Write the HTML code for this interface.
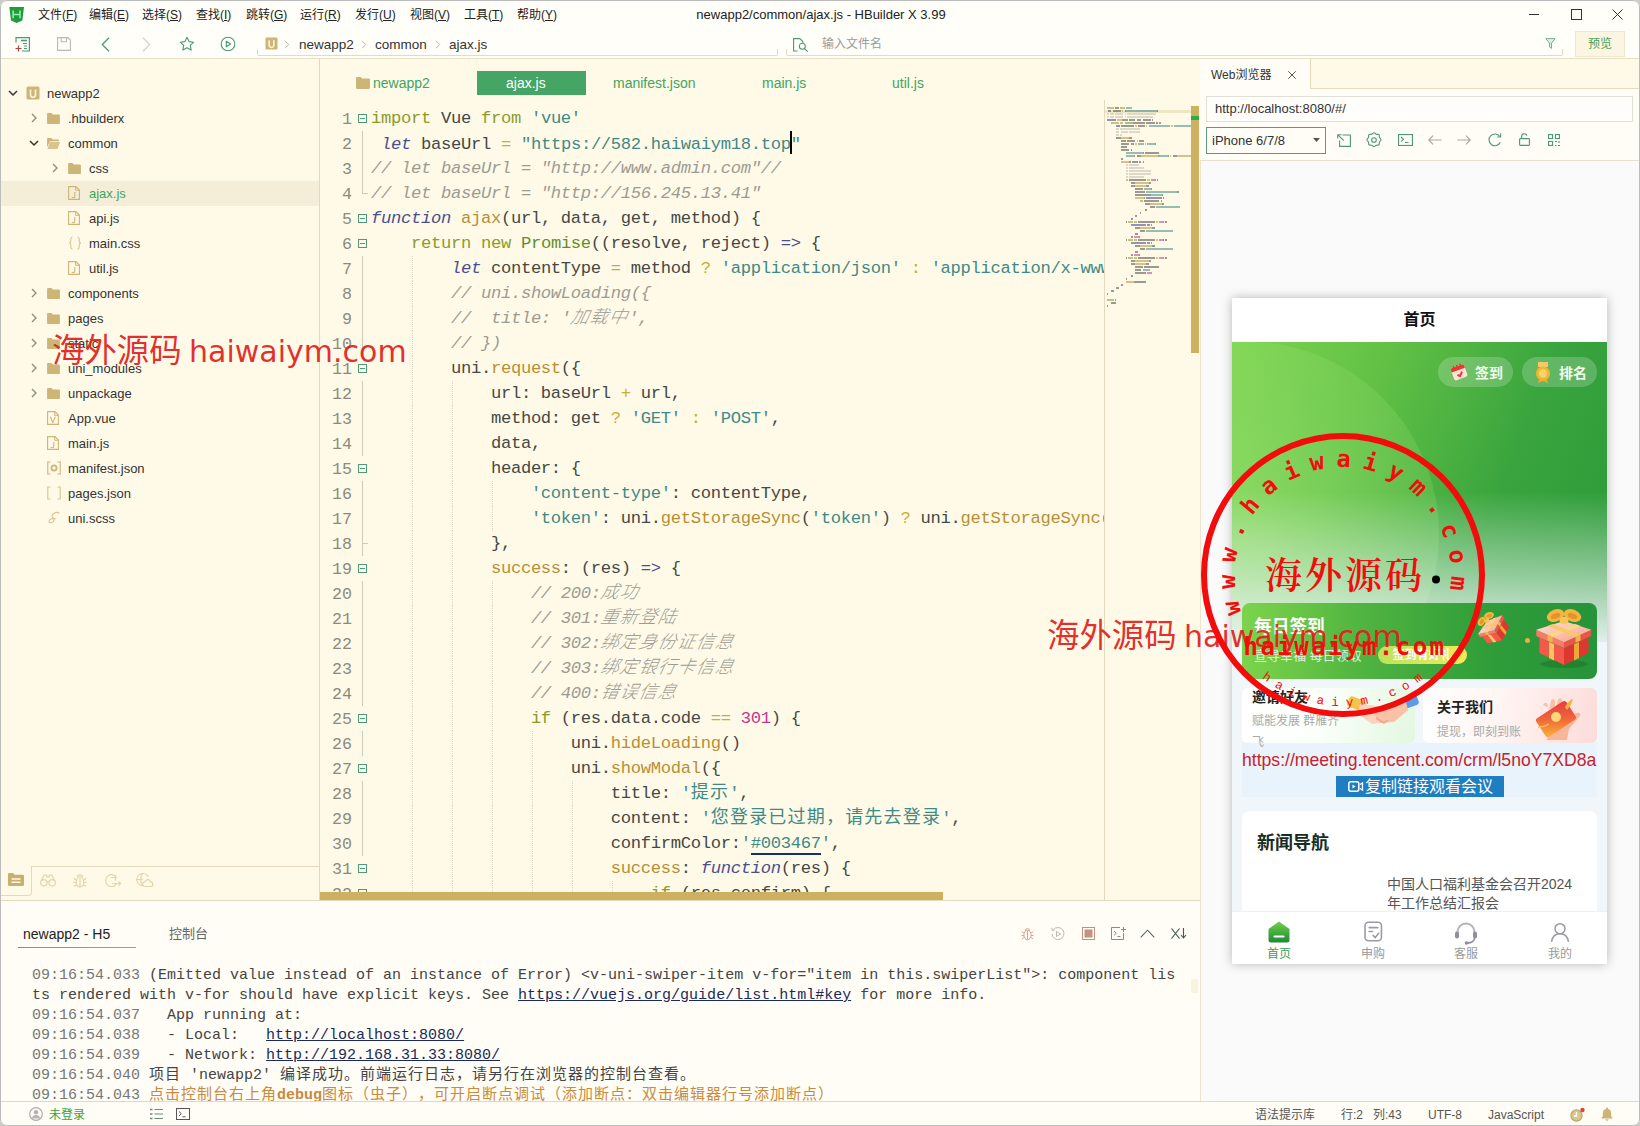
<!DOCTYPE html>
<html lang="zh-CN"><head><meta charset="utf-8"><title>newapp2/common/ajax.js - HBuilder X 3.99</title>
<style>
*{box-sizing:border-box;margin:0;padding:0}
html,body{width:1640px;height:1126px;overflow:hidden;background:#fffae8}
body{position:relative;font-family:"Liberation Sans","Noto Sans CJK SC",sans-serif;font-size:13px;color:#333}
.abs{position:absolute}
svg{display:block;overflow:visible}
#titlebar{position:absolute;left:0;top:0;width:1640px;height:28px;background:#fffef9}
#toolbar{position:absolute;left:0;top:28px;width:1640px;height:31px;background:#fffef9;border-bottom:1px solid #e8dfc4}
.menu{position:absolute;top:7px;font-size:12px;color:#222;white-space:nowrap;line-height:16px}
#title{position:absolute;top:7px;left:0;width:1640px;text-align:center;font-size:13px;color:#222;line-height:16px;padding-left:2px}
/* left */
#left{position:absolute;left:0;top:59px;width:320px;height:841px;background:#fffae8;border-right:1px solid #e3dabd}
.trow{position:absolute;left:0;width:319px;height:25px}
.trow.sel{background:#f4eed8}
.trow .ti{position:absolute}
.trow .tl{position:absolute;top:0;line-height:25px;font-size:13px;color:#333;white-space:nowrap}
.trow.sel .tl{color:#3ea55f}
/* editor */
#editor{position:absolute;left:320px;top:59px;width:880px;height:841px;background:#fffae8;overflow:hidden}
.tab{position:absolute;top:12px;height:24px;line-height:24px;font-size:14px;color:#3ea55f;white-space:nowrap}
#codearea{position:absolute;left:0;top:42px;width:784px;height:791px;overflow:hidden}
.ln{position:absolute;left:0;margin-top:1px;width:32px;text-align:right;font:16.67px/26px "Liberation Mono",monospace;color:#8b8b7d;height:26px}
.cl{position:absolute;left:51px;margin-top:0;white-space:pre;font:17.2px/26px "Liberation Mono","Noto Sans CJK SC",monospace;letter-spacing:-.322px;color:#444944;height:26px}
.fold{position:absolute;left:38px;width:9px;height:9px;border:1px solid #4f9a7a;background:#fffae8}
.fold:after{content:"";position:absolute;left:1px;top:3px;width:5px;height:1px;background:#4f9a7a}
.k{color:#8c9a2c}.b{color:#4a4f8e;font-style:italic}.b2{color:#4a4f8e}.s,.q{color:#3e8a84}
.f{color:#b88f35}.c{color:#9c9c92;font-style:italic}.n{color:#c4388c}.g{color:#5f8f2f}.o{color:#c2b030}
.cz{line-height:20px;font-weight:300;color:#9c9c92;font-style:italic;font-size:18px;letter-spacing:1.1px;font-family:"Liberation Sans","Noto Sans CJK SC",sans-serif;display:inline-block;transform:skewX(-12deg)}
.sz{line-height:20px;color:#3e8a84;font-size:18px;letter-spacing:1.2px;font-family:"Liberation Sans","Noto Sans CJK SC",sans-serif}
.su{color:#3e8a84;border-bottom:2px solid #1b2e6e}
.cur{display:inline-block;width:2px;height:23px;background:#000;vertical-align:-5px;margin:0 -1px}
/* console */
#console{position:absolute;left:0;top:900px;width:1200px;height:201px;background:#fffdf5;border-top:1px solid #e3dabd}
.col{position:absolute;left:32px;margin-top:3px;white-space:pre;font:15px/20px "Liberation Mono","Noto Sans CJK SC",monospace;color:#444;height:20px}
.col .t{color:#777}
.col a{color:#1a2a5e;text-decoration:underline}
.col .w{color:#c88a3c}
.col .z{line-height:16px;font-family:"Liberation Sans","Noto Sans CJK SC",sans-serif;font-size:15px;letter-spacing:1px;text-spacing-trim:space-all}
/* status */
#status{position:absolute;left:0;top:1101px;width:1640px;height:25px;background:#fffdf5;border-top:1px solid #e3dabd;font-size:12px;color:#555}
#status span{position:absolute;top:5px;line-height:16px;white-space:nowrap}
/* right */
#right{position:absolute;left:1200px;top:59px;width:440px;height:1042px;background:#fafafa;box-shadow:inset 1px 0 0 #ece4cc}
.wm{position:absolute;color:rgba(224,28,26,.92);font-size:32.400px;white-space:nowrap;line-height:40px;font-family:"Liberation Sans","Noto Sans CJK SC",sans-serif;z-index:50}

.tray{position:absolute;top:21px;height:7px;border:1px solid #e3dcc3;border-top:none;border-radius:0 0 2px 2px}
.bc{position:absolute;top:9px;font-size:13.500px;line-height:16px;color:#333;white-space:nowrap}

#phone{position:absolute;left:1232px;top:298px;width:375px;height:666px;background:#f1f6fb;box-shadow:0 0 10px rgba(0,0,0,.27);overflow:hidden;font-family:"Liberation Sans","Noto Sans CJK SC",sans-serif}
#phone .abs{position:absolute}
#phead{position:absolute;left:0;top:0;width:375px;height:44px;background:#fff;text-align:center;font-size:16px;font-weight:bold;line-height:44px;color:#111}
#banner{position:absolute;left:0;top:44px;width:375px;height:300px;background:
 linear-gradient(180deg,rgba(255,255,255,0) 0,rgba(255,255,255,0) 50%,rgba(241,246,251,.5) 78%,rgba(241,246,251,.92) 100%),
 radial-gradient(circle 193px at 14.500px 192px,rgba(190,245,150,.34) 0,rgba(170,235,130,.24) 70%,rgba(160,230,120,.20) 99.400%,rgba(160,230,120,0) 100%),
 linear-gradient(112deg,#7dd450 0,#62c145 32%,#3aa53e 66%,#2a9838 100%)}
.pill{position:absolute;top:59px;height:30px;width:75px;border-radius:15px;background:rgba(255,255,255,.2);color:#f4fff2;font-size:14px;font-weight:bold;line-height:30px}
.pill span{position:absolute;left:37px;top:1px}
#tabbar{position:absolute;left:0;top:613px;width:375px;height:53px;background:#fff;border-top:1px solid #f0f0f0}
#tabbar span{position:absolute;top:35px;width:60px;text-align:center;font-size:12px;line-height:14px;color:#999}
.wm span{font-family:"DejaVu Sans","Liberation Sans",sans-serif;font-size:30px;margin-left:-1.500px}

#lbar{position:absolute;left:0;top:866px;width:319px;height:34px;background:#fffae8}
#conlines{position:absolute;left:0;top:0;width:1190px;height:200px;overflow:hidden}
.col.w{color:#c98a3e}
.col.w .t{color:#777}
.col b{font-weight:bold}

#minimap{position:absolute;left:784px;top:41px;width:87px;height:800px;border-left:1px solid #e3dabd;overflow:hidden}
.ig{position:absolute;width:1px;height:25px;background-image:linear-gradient(#d9d4c3 50%,transparent 50%);background-size:1px 2px}
.fl{position:absolute;left:42px;width:1px;background:#cfcab8}
.ft{position:absolute;left:42px;width:6px;height:1px;background:#cfcab8}
#frame{position:absolute;left:0;top:0;width:1640px;height:1126px;border:1px solid #bcbcbc;border-radius:7px;box-shadow:0 0 0 12px #c9c9c9;z-index:200;pointer-events:none}

</style></head>
<body>
<div id="titlebar">
  <svg class="abs" style="left:9px;top:7px" width="16" height="16" viewBox="0 0 16 16"><path d="M.300 0H15l-1.700 13.500L7.600 16 2 13.500z" fill="#1f9c3e"/><path d="M4.100 3.600v7.600M11 3.600v7.600M4.100 7.400H11" stroke="#98f2a8" stroke-width="1.500" fill="none"/></svg>
  <span class="menu" style="left:38px">文件(<u>F</u>)</span>
  <span class="menu" style="left:89px">编辑(<u>E</u>)</span>
  <span class="menu" style="left:142px">选择(<u>S</u>)</span>
  <span class="menu" style="left:196px">查找(<u>I</u>)</span>
  <span class="menu" style="left:246px">跳转(<u>G</u>)</span>
  <span class="menu" style="left:300px">运行(<u>R</u>)</span>
  <span class="menu" style="left:355px">发行(<u>U</u>)</span>
  <span class="menu" style="left:410px">视图(<u>V</u>)</span>
  <span class="menu" style="left:464px">工具(<u>T</u>)</span>
  <span class="menu" style="left:517px">帮助(<u>Y</u>)</span>
  <div id="title">newapp2/common/ajax.js - HBuilder X 3.99</div>
  <svg class="abs" style="left:1529px;top:9px" width="10" height="11" viewBox="0 0 10 11"><path d="M0 5.500h10" stroke="#333" stroke-width="1"/></svg>
  <svg class="abs" style="left:1571px;top:9px" width="11" height="11" viewBox="0 0 11 11"><rect x=".5" y=".5" width="10" height="10" fill="none" stroke="#333" stroke-width="1"/></svg>
  <svg class="abs" style="left:1612px;top:9px" width="11" height="11" viewBox="0 0 11 11"><path d="M.500.500l10 10M10.500.500l-10 10" stroke="#333" stroke-width="1"/></svg>
</div>
<div id="toolbar">
  <!-- new file -->
  <svg class="abs" style="left:15px;top:9px" width="15" height="15" viewBox="0 0 15 15"><path d="M1 5.500V.600h13.400v13.400H7" fill="none" stroke="#4a9a78" stroke-width="1.200"/><path d="M6 3.500h6" stroke="#4a9a78" stroke-width="1.600"/><path d="M8 6.500h4M9 9h3M9 11.500h3" stroke="#4a9a78" stroke-width="1"/><path d="M3.500 8.500v6M.5 11.500h6" stroke="#b8423a" stroke-width="1.200"/></svg>
  <!-- save -->
  <svg class="abs" style="left:57px;top:9px" width="14" height="14" viewBox="0 0 14 14"><path d="M.6.600h10.400l2.400 2.400v10.400H.6z" fill="none" stroke="#b9b9b4" stroke-width="1.100"/><path d="M4.200.600v4.200h5.300V.600" fill="none" stroke="#b9b9b4" stroke-width="1.100"/></svg>
  <!-- back -->
  <svg class="abs" style="left:101px;top:9px" width="9" height="15" viewBox="0 0 9 15"><path d="M8 .800L1.300 7.500 8 14.200" fill="none" stroke="#4a9a78" stroke-width="1.300"/></svg>
  <!-- forward -->
  <svg class="abs" style="left:142px;top:9px" width="9" height="15" viewBox="0 0 9 15"><path d="M1 .800l6.700 6.700L1 14.200" fill="none" stroke="#d4d4cc" stroke-width="1.300"/></svg>
  <!-- star -->
  <svg class="abs" style="left:179px;top:8px" width="16" height="16" viewBox="0 0 16 16"><path d="M8 1.300l2.050 4.300 4.650.600-3.400 3.250.85 4.650L8 11.850 3.850 14.100l.85-4.650L1.300 6.200l4.650-.6z" fill="none" stroke="#4a9a78" stroke-width="1.100" stroke-linejoin="round"/></svg>
  <!-- play -->
  <svg class="abs" style="left:220px;top:8px" width="16" height="16" viewBox="0 0 16 16"><circle cx="8" cy="8" r="6.800" fill="none" stroke="#4a9a78" stroke-width="1.100"/><path d="M6.300 5.200l4.300 2.800-4.300 2.800z" fill="none" stroke="#4a9a78" stroke-width="1.100" stroke-linejoin="round"/></svg>
  <!-- breadcrumb tray -->
  <div class="tray" style="left:257px;width:521px"></div>
  <span class="abs" style="left:265px;top:9px"><svg width="13" height="13" viewBox="0 0 14 14"><rect x="0.500" y="0.500" width="13" height="13" rx="1.500" fill="#cdb477"/><path d="M4.500 3.500v5.200a2.500 2.500 0 0 0 5 0V3.500" fill="none" stroke="#fff8e0" stroke-width="1.600"/></svg></span>
  <svg class="abs" style="left:284px;top:12px" width="6" height="9" viewBox="0 0 6 9"><path d="M1 .800l3.700 3.700L1 8.200" fill="none" stroke="#b5b5ad" stroke-width="1"/></svg>
  <span class="bc" style="left:299px">newapp2</span>
  <svg class="abs" style="left:361px;top:12px" width="6" height="9" viewBox="0 0 6 9"><path d="M1 .800l3.700 3.700L1 8.200" fill="none" stroke="#b5b5ad" stroke-width="1"/></svg>
  <span class="bc" style="left:375px">common</span>
  <svg class="abs" style="left:435px;top:12px" width="6" height="9" viewBox="0 0 6 9"><path d="M1 .800l3.700 3.700L1 8.200" fill="none" stroke="#b5b5ad" stroke-width="1"/></svg>
  <span class="bc" style="left:449px">ajax.js</span>
  <!-- search tray -->
  <div class="tray" style="left:786px;width:777px"></div>
  <svg class="abs" style="left:793px;top:10px" width="16" height="14" viewBox="0 0 16 14"><path d="M4.500 13H.600V.600h6.200l3 3V5" fill="none" stroke="#4a9a78" stroke-width="1.100"/><circle cx="9.300" cy="8.300" r="3" fill="none" stroke="#4a9a78" stroke-width="1.100"/><path d="M11.500 10.600l3.200 3" stroke="#4a9a78" stroke-width="1.100"/></svg>
  <span class="abs" style="left:822px;top:8px;font-size:12px;line-height:16px;color:#9a9a9a">输入文件名</span>
  <svg class="abs" style="left:1545px;top:10px" width="11" height="11" viewBox="0 0 11 11"><path d="M.800.600h9.400L6.500 5v5.400L4.500 9V5z" fill="#dff0e4" stroke="#6ab592" stroke-width="1" stroke-linejoin="round"/></svg>
  <div class="abs" style="left:1575px;top:3px;width:50px;height:26px;background:#fcf5e2;border:1px solid #efe7cf;color:#48a05c;font-size:12px;line-height:24px;text-align:center">预览</div>
</div>

<div id="left">
<div style="position:absolute;left:0;top:-59px;width:320px;height:900px">
<div class="trow" style="top:81px"><span class="ti" style="left:8px;top:8px"><svg width="10" height="8" viewBox="0 0 10 8"><path d="M1 2l4 4 4-4" fill="none" stroke="#333" stroke-width="1.500"/></svg></span><span class="ti" style="left:26px;top:5px"><svg width="14" height="14" viewBox="0 0 14 14"><rect x="0.5" y="0.5" width="13" height="13" rx="1.5" fill="#cdb477"/><path d="M4.5 3.5v5.2a2.5 2.5 0 0 0 5 0V3.500" fill="none" stroke="#fff8e0" stroke-width="1.6"/></svg></span><span class="tl" style="left:47px">newapp2</span></div>
<div class="trow" style="top:106px"><span class="ti" style="left:30px;top:7px"><svg width="8" height="10" viewBox="0 0 8 10"><path d="M2 1l4 4-4 4" fill="none" stroke="#8f8a78" stroke-width="1.300"/></svg></span><span class="ti" style="left:47px;top:7px"><svg width="13" height="11" viewBox="0 0 14 12"><path d="M0 1.2C0 .5.5 0 1.200 0h3.600l1.400 1.600h6.600c.7 0 1.200.5 1.200 1.200V10.800c0 .7-.5 1.200-1.200 1.200H1.200C.5 12 0 11.500 0 10.800z" fill="#cdb477"/></svg></span><span class="tl" style="left:68px">.hbuilderx</span></div>
<div class="trow" style="top:131px"><span class="ti" style="left:29px;top:8px"><svg width="10" height="8" viewBox="0 0 10 8"><path d="M1 2l4 4 4-4" fill="none" stroke="#333" stroke-width="1.500"/></svg></span><span class="ti" style="left:47px;top:7px"><svg width="13" height="11" viewBox="0 0 14 12"><path d="M0 1.200C0 .5.5 0 1.200 0h3.600l1.400 1.600h5.600c.7 0 1.200.5 1.200 1.200v.8H3.200L0 10z" fill="#cdb477"/><path d="M3 4.400h11l-2.400 7.600H.4z" fill="#d9c48f"/></svg></span><span class="tl" style="left:68px">common</span></div>
<div class="trow" style="top:156px"><span class="ti" style="left:51px;top:7px"><svg width="8" height="10" viewBox="0 0 8 10"><path d="M2 1l4 4-4 4" fill="none" stroke="#8f8a78" stroke-width="1.300"/></svg></span><span class="ti" style="left:68px;top:7px"><svg width="13" height="11" viewBox="0 0 14 12"><path d="M0 1.2C0 .5.5 0 1.200 0h3.600l1.400 1.600h6.600c.7 0 1.200.5 1.200 1.200V10.800c0 .7-.5 1.200-1.200 1.200H1.200C.5 12 0 11.500 0 10.800z" fill="#cdb477"/></svg></span><span class="tl" style="left:89px">css</span></div>
<div class="trow sel" style="top:181px"><span class="ti" style="left:68px;top:5px"><svg width="12" height="14" viewBox="0 0 12 14"><path d="M.6.600h7.300l3.500 3.500v9.300H.6z" fill="none" stroke="#cdb477" stroke-width="1.100"/><path d="M7.700.600v3.700h3.700" fill="none" stroke="#cdb477" stroke-width="1"/><path d="M6.800 6v4.200c0 1.100-.5 1.600-1.400 1.600-.8 0-1.300-.4-1.500-1" fill="none" stroke="#cdb477" stroke-width="1.100"/></svg></span><span class="tl" style="left:89px">ajax.js</span></div>
<div class="trow" style="top:206px"><span class="ti" style="left:68px;top:5px"><svg width="12" height="14" viewBox="0 0 12 14"><path d="M.6.600h7.300l3.500 3.500v9.300H.6z" fill="none" stroke="#cdb477" stroke-width="1.100"/><path d="M7.700.600v3.700h3.700" fill="none" stroke="#cdb477" stroke-width="1"/><path d="M6.800 6v4.200c0 1.100-.5 1.600-1.400 1.600-.8 0-1.300-.4-1.500-1" fill="none" stroke="#cdb477" stroke-width="1.100"/></svg></span><span class="tl" style="left:89px">api.js</span></div>
<div class="trow" style="top:231px"><span class="ti" style="left:68px;top:5px"><svg width="14" height="14" viewBox="0 0 14 14"><path d="M4.500 1C3 1 2.800 1.800 2.800 3v2c0 1.200-.6 2-1.800 2 1.200 0 1.800.8 1.800 2v2c0 1.200.2 2 1.700 2M9.500 1c1.500 0 1.700.8 1.700 2v2c0 1.200.6 2 1.800 2-1.200 0-1.800.8-1.800 2v2c0 1.200-.2 2-1.700 2" fill="none" stroke="#d9c48f" stroke-width="1.100"/></svg></span><span class="tl" style="left:89px">main.css</span></div>
<div class="trow" style="top:256px"><span class="ti" style="left:68px;top:5px"><svg width="12" height="14" viewBox="0 0 12 14"><path d="M.6.600h7.300l3.500 3.500v9.300H.6z" fill="none" stroke="#cdb477" stroke-width="1.100"/><path d="M7.700.600v3.700h3.700" fill="none" stroke="#cdb477" stroke-width="1"/><path d="M6.800 6v4.200c0 1.100-.5 1.600-1.400 1.600-.8 0-1.300-.4-1.500-1" fill="none" stroke="#cdb477" stroke-width="1.100"/></svg></span><span class="tl" style="left:89px">util.js</span></div>
<div class="trow" style="top:281px"><span class="ti" style="left:30px;top:7px"><svg width="8" height="10" viewBox="0 0 8 10"><path d="M2 1l4 4-4 4" fill="none" stroke="#8f8a78" stroke-width="1.300"/></svg></span><span class="ti" style="left:47px;top:7px"><svg width="13" height="11" viewBox="0 0 14 12"><path d="M0 1.2C0 .5.5 0 1.200 0h3.600l1.400 1.600h6.600c.7 0 1.200.5 1.200 1.200V10.800c0 .7-.5 1.200-1.200 1.200H1.200C.5 12 0 11.500 0 10.800z" fill="#cdb477"/></svg></span><span class="tl" style="left:68px">components</span></div>
<div class="trow" style="top:306px"><span class="ti" style="left:30px;top:7px"><svg width="8" height="10" viewBox="0 0 8 10"><path d="M2 1l4 4-4 4" fill="none" stroke="#8f8a78" stroke-width="1.300"/></svg></span><span class="ti" style="left:47px;top:7px"><svg width="13" height="11" viewBox="0 0 14 12"><path d="M0 1.2C0 .5.5 0 1.200 0h3.600l1.400 1.600h6.600c.7 0 1.200.5 1.200 1.200V10.800c0 .7-.5 1.200-1.200 1.200H1.200C.5 12 0 11.500 0 10.800z" fill="#cdb477"/></svg></span><span class="tl" style="left:68px">pages</span></div>
<div class="trow" style="top:331px"><span class="ti" style="left:30px;top:7px"><svg width="8" height="10" viewBox="0 0 8 10"><path d="M2 1l4 4-4 4" fill="none" stroke="#8f8a78" stroke-width="1.300"/></svg></span><span class="ti" style="left:47px;top:7px"><svg width="13" height="11" viewBox="0 0 14 12"><path d="M0 1.2C0 .5.5 0 1.200 0h3.600l1.400 1.600h6.600c.7 0 1.200.5 1.200 1.200V10.800c0 .7-.5 1.200-1.200 1.200H1.200C.5 12 0 11.500 0 10.800z" fill="#cdb477"/></svg></span><span class="tl" style="left:68px">static</span></div>
<div class="trow" style="top:356px"><span class="ti" style="left:30px;top:7px"><svg width="8" height="10" viewBox="0 0 8 10"><path d="M2 1l4 4-4 4" fill="none" stroke="#8f8a78" stroke-width="1.300"/></svg></span><span class="ti" style="left:47px;top:7px"><svg width="13" height="11" viewBox="0 0 14 12"><path d="M0 1.2C0 .5.5 0 1.200 0h3.600l1.400 1.600h6.600c.7 0 1.200.5 1.200 1.200V10.800c0 .7-.5 1.200-1.200 1.200H1.200C.5 12 0 11.500 0 10.800z" fill="#cdb477"/></svg></span><span class="tl" style="left:68px">uni_modules</span></div>
<div class="trow" style="top:381px"><span class="ti" style="left:30px;top:7px"><svg width="8" height="10" viewBox="0 0 8 10"><path d="M2 1l4 4-4 4" fill="none" stroke="#8f8a78" stroke-width="1.300"/></svg></span><span class="ti" style="left:47px;top:7px"><svg width="13" height="11" viewBox="0 0 14 12"><path d="M0 1.2C0 .5.5 0 1.200 0h3.600l1.400 1.600h6.600c.7 0 1.200.5 1.200 1.200V10.800c0 .7-.5 1.200-1.200 1.200H1.200C.5 12 0 11.500 0 10.800z" fill="#cdb477"/></svg></span><span class="tl" style="left:68px">unpackage</span></div>
<div class="trow" style="top:406px"><span class="ti" style="left:47px;top:5px"><svg width="12" height="14" viewBox="0 0 12 14"><path d="M.6.600h7.300l3.500 3.500v9.300H.6z" fill="none" stroke="#cdb477" stroke-width="1.100"/><path d="M7.700.600v3.700h3.700" fill="none" stroke="#cdb477" stroke-width="1"/><path d="M3.200 5.800l2.600 5.600 2.600-5.600" fill="none" stroke="#cdb477" stroke-width="1.100"/></svg></span><span class="tl" style="left:68px">App.vue</span></div>
<div class="trow" style="top:431px"><span class="ti" style="left:47px;top:5px"><svg width="12" height="14" viewBox="0 0 12 14"><path d="M.6.600h7.300l3.500 3.500v9.300H.6z" fill="none" stroke="#cdb477" stroke-width="1.100"/><path d="M7.700.600v3.700h3.700" fill="none" stroke="#cdb477" stroke-width="1"/><path d="M6.800 6v4.200c0 1.100-.5 1.600-1.400 1.600-.8 0-1.300-.4-1.500-1" fill="none" stroke="#cdb477" stroke-width="1.100"/></svg></span><span class="tl" style="left:68px">main.js</span></div>
<div class="trow" style="top:456px"><span class="ti" style="left:47px;top:5px"><svg width="14" height="14" viewBox="0 0 14 14"><path d="M3.500 1H.8v12h2.700M10.500 1h2.700v12h-2.700" fill="none" stroke="#cdb477" stroke-width="1.100"/><circle cx="7" cy="7" r="2.600" fill="none" stroke="#cdb477" stroke-width="1.800"/></svg></span><span class="tl" style="left:68px">manifest.json</span></div>
<div class="trow" style="top:481px"><span class="ti" style="left:47px;top:5px"><svg width="14" height="14" viewBox="0 0 14 14"><path d="M3.500 1H.8v12h2.700M10.500 1h2.700v12h-2.700" fill="none" stroke="#d9c48f" stroke-width="1.100"/></svg></span><span class="tl" style="left:68px">pages.json</span></div>
<div class="trow" style="top:506px"><span class="ti" style="left:47px;top:5px"><svg width="14" height="14" viewBox="0 0 14 14"><path d="M12.500 2.500C11 .5 6 1.500 5 4.500c-.8 2.300 2.500 3 2 5-.4 1.700-3 3-4.500 2-1.200-.8-.3-2.600 1.500-3.500 1.600-.8 3.500-.7 4.500 0" fill="none" stroke="#d9c48f" stroke-width="1.100"/></svg></span><span class="tl" style="left:68px">uni.scss</span></div>
</div>
</div>

<div id="editor">
  <div class="tab" style="left:53px;color:#3ea55f">newapp2</div>
  <div class="tab" style="left:157px;width:109px;background:#44a565;color:#fff;padding-left:29px">ajax.js</div>
  <div class="tab" style="left:293px">manifest.json</div>
  <div class="tab" style="left:442px">main.js</div>
  <div class="tab" style="left:572px">util.js</div>
  <svg class="abs" style="left:36px;top:18px" width="14" height="12" viewBox="0 0 14 12"><path d="M0 1.200C0 .5.5 0 1.200 0h3.600l1.400 1.600h6.600c.7 0 1.200.5 1.200 1.200V10.800c0 .7-.5 1.200-1.200 1.200H1.200C.5 12 0 11.500 0 10.800z" fill="#cdb477"/></svg>
  <div id="minimap"><div class="abs" style="left:0;top:6px;width:87px;height:800px"><div class="abs" style="left:0;top:4px;width:87px;height:3px;background:#efe6c6"></div><svg class="abs" style="left:0;top:0" width="87" height="203" viewBox="0 0 87 203" shape-rendering="crispEdges"><rect x="1.5" y="1" width="7.2" height="2" fill="#8c9a2c" opacity=".55"/><rect x="9.9" y="1" width="3.6" height="2" fill="#4a4a44" opacity=".55"/><rect x="14.7" y="1" width="4.8" height="2" fill="#8c9a2c" opacity=".55"/><rect x="20.7" y="1" width="6.0" height="2" fill="#3e8a84" opacity=".55"/><rect x="2.7" y="4" width="3.6" height="2" fill="#3c3c96" opacity=".55"/><rect x="7.5" y="4" width="8.4" height="2" fill="#4a4a44" opacity=".55"/><rect x="17.1" y="4" width="1.2" height="2" fill="#b2a02c" opacity=".55"/><rect x="19.5" y="4" width="1.2" height="2" fill="#3a3a3a" opacity=".55"/><rect x="20.7" y="4" width="31.2" height="2" fill="#3e8a84" opacity=".55"/><rect x="51.9" y="4" width="1.2" height="2" fill="#3a3a3a" opacity=".55"/><rect x="1.5" y="7" width="2.4" height="2" fill="#a8a89e" opacity=".4"/><rect x="5.1" y="7" width="3.6" height="2" fill="#a8a89e" opacity=".4"/><rect x="9.9" y="7" width="8.4" height="2" fill="#a8a89e" opacity=".4"/><rect x="19.5" y="7" width="1.2" height="2" fill="#a8a89e" opacity=".4"/><rect x="21.9" y="7" width="28.8" height="2" fill="#a8a89e" opacity=".4"/><rect x="1.5" y="10" width="2.4" height="2" fill="#a8a89e" opacity=".4"/><rect x="5.1" y="10" width="3.6" height="2" fill="#a8a89e" opacity=".4"/><rect x="9.9" y="10" width="8.4" height="2" fill="#a8a89e" opacity=".4"/><rect x="19.5" y="10" width="1.2" height="2" fill="#a8a89e" opacity=".4"/><rect x="21.9" y="10" width="26.4" height="2" fill="#a8a89e" opacity=".4"/><rect x="1.5" y="13" width="9.6" height="2" fill="#3c3c96" opacity=".55"/><rect x="12.3" y="13" width="4.8" height="2" fill="#b88f35" opacity=".55"/><rect x="17.1" y="13" width="6.0" height="2" fill="#4a4a44" opacity=".55"/><rect x="24.3" y="13" width="6.0" height="2" fill="#4a4a44" opacity=".55"/><rect x="31.5" y="13" width="4.8" height="2" fill="#4a4a44" opacity=".55"/><rect x="37.5" y="13" width="8.4" height="2" fill="#4a4a44" opacity=".55"/><rect x="47.1" y="13" width="1.2" height="2" fill="#4a4a44" opacity=".55"/><rect x="6.3" y="16" width="7.2" height="2" fill="#8c9a2c" opacity=".55"/><rect x="14.7" y="16" width="3.6" height="2" fill="#8c9a2c" opacity=".55"/><rect x="19.5" y="16" width="8.4" height="2" fill="#5f8f2f" opacity=".55"/><rect x="27.9" y="16" width="12.0" height="2" fill="#4a4a44" opacity=".55"/><rect x="41.1" y="16" width="8.4" height="2" fill="#4a4a44" opacity=".55"/><rect x="50.7" y="16" width="2.4" height="2" fill="#3c3c96" opacity=".55"/><rect x="54.3" y="16" width="1.2" height="2" fill="#4a4a44" opacity=".55"/><rect x="11.1" y="19" width="3.6" height="2" fill="#3c3c96" opacity=".55"/><rect x="15.9" y="19" width="13.2" height="2" fill="#4a4a44" opacity=".55"/><rect x="30.3" y="19" width="1.2" height="2" fill="#b2a02c" opacity=".55"/><rect x="32.7" y="19" width="7.2" height="2" fill="#4a4a44" opacity=".55"/><rect x="41.1" y="19" width="1.2" height="2" fill="#b2a02c" opacity=".55"/><rect x="43.5" y="19" width="21.6" height="2" fill="#3e8a84" opacity=".55"/><rect x="66.3" y="19" width="1.2" height="2" fill="#b2a02c" opacity=".55"/><rect x="68.7" y="19" width="17.3" height="2" fill="#3e8a84" opacity=".55"/><rect x="11.1" y="22" width="2.4" height="2" fill="#a8a89e" opacity=".4"/><rect x="14.7" y="22" width="20.4" height="2" fill="#a8a89e" opacity=".4"/><rect x="11.1" y="25" width="2.4" height="2" fill="#a8a89e" opacity=".4"/><rect x="15.9" y="25" width="7.2" height="2" fill="#a8a89e" opacity=".4"/><rect x="24.3" y="25" width="1.2" height="2" fill="#a8a89e" opacity=".4"/><rect x="25.5" y="25" width="7.2" height="2" fill="#a8a89e" opacity=".4"/><rect x="32.7" y="25" width="2.4" height="2" fill="#a8a89e" opacity=".4"/><rect x="11.1" y="28" width="2.4" height="2" fill="#a8a89e" opacity=".4"/><rect x="14.7" y="28" width="2.4" height="2" fill="#a8a89e" opacity=".4"/><rect x="11.1" y="31" width="4.8" height="2" fill="#4a4a44" opacity=".55"/><rect x="15.9" y="31" width="8.4" height="2" fill="#b88f35" opacity=".55"/><rect x="24.3" y="31" width="2.4" height="2" fill="#4a4a44" opacity=".55"/><rect x="15.9" y="34" width="4.8" height="2" fill="#4a4a44" opacity=".55"/><rect x="21.9" y="34" width="8.4" height="2" fill="#4a4a44" opacity=".55"/><rect x="31.5" y="34" width="1.2" height="2" fill="#b2a02c" opacity=".55"/><rect x="33.9" y="34" width="4.8" height="2" fill="#4a4a44" opacity=".55"/><rect x="15.9" y="37" width="8.4" height="2" fill="#4a4a44" opacity=".55"/><rect x="25.5" y="37" width="3.6" height="2" fill="#4a4a44" opacity=".55"/><rect x="30.3" y="37" width="1.2" height="2" fill="#b2a02c" opacity=".55"/><rect x="32.7" y="37" width="6.0" height="2" fill="#3e8a84" opacity=".55"/><rect x="39.9" y="37" width="1.2" height="2" fill="#b2a02c" opacity=".55"/><rect x="42.3" y="37" width="7.2" height="2" fill="#3e8a84" opacity=".55"/><rect x="49.5" y="37" width="1.2" height="2" fill="#4a4a44" opacity=".55"/><rect x="15.9" y="40" width="6.0" height="2" fill="#4a4a44" opacity=".55"/><rect x="15.9" y="43" width="8.4" height="2" fill="#4a4a44" opacity=".55"/><rect x="25.5" y="43" width="1.2" height="2" fill="#4a4a44" opacity=".55"/><rect x="20.7" y="46" width="16.8" height="2" fill="#3e8a84" opacity=".55"/><rect x="37.5" y="46" width="1.2" height="2" fill="#4a4a44" opacity=".55"/><rect x="39.9" y="46" width="14.4" height="2" fill="#4a4a44" opacity=".55"/><rect x="20.7" y="49" width="8.4" height="2" fill="#3e8a84" opacity=".55"/><rect x="29.1" y="49" width="1.2" height="2" fill="#4a4a44" opacity=".55"/><rect x="31.5" y="49" width="4.8" height="2" fill="#4a4a44" opacity=".55"/><rect x="36.3" y="49" width="16.8" height="2" fill="#b88f35" opacity=".55"/><rect x="53.1" y="49" width="1.2" height="2" fill="#4a4a44" opacity=".55"/><rect x="54.3" y="49" width="8.4" height="2" fill="#3e8a84" opacity=".55"/><rect x="62.7" y="49" width="1.2" height="2" fill="#4a4a44" opacity=".55"/><rect x="65.1" y="49" width="1.2" height="2" fill="#b2a02c" opacity=".55"/><rect x="67.5" y="49" width="4.8" height="2" fill="#4a4a44" opacity=".55"/><rect x="72.3" y="49" width="13.7" height="2" fill="#b88f35" opacity=".55"/><rect x="15.9" y="52" width="2.4" height="2" fill="#4a4a44" opacity=".55"/><rect x="15.9" y="55" width="8.4" height="2" fill="#b88f35" opacity=".55"/><rect x="24.3" y="55" width="1.2" height="2" fill="#4a4a44" opacity=".55"/><rect x="26.7" y="55" width="6.0" height="2" fill="#4a4a44" opacity=".55"/><rect x="33.9" y="55" width="2.4" height="2" fill="#3c3c96" opacity=".55"/><rect x="37.5" y="55" width="1.2" height="2" fill="#4a4a44" opacity=".55"/><rect x="20.7" y="58" width="2.4" height="2" fill="#a8a89e" opacity=".4"/><rect x="24.3" y="58" width="4.8" height="2" fill="#a8a89e" opacity=".4"/><rect x="29.1" y="58" width="4.8" height="2" fill="#a8a89e" opacity=".4"/><rect x="20.7" y="61" width="2.4" height="2" fill="#a8a89e" opacity=".4"/><rect x="24.3" y="61" width="4.8" height="2" fill="#a8a89e" opacity=".4"/><rect x="29.1" y="61" width="9.6" height="2" fill="#a8a89e" opacity=".4"/><rect x="20.7" y="64" width="2.4" height="2" fill="#a8a89e" opacity=".4"/><rect x="24.3" y="64" width="4.8" height="2" fill="#a8a89e" opacity=".4"/><rect x="29.1" y="64" width="16.8" height="2" fill="#a8a89e" opacity=".4"/><rect x="20.7" y="67" width="2.4" height="2" fill="#a8a89e" opacity=".4"/><rect x="24.3" y="67" width="4.8" height="2" fill="#a8a89e" opacity=".4"/><rect x="29.1" y="67" width="16.8" height="2" fill="#a8a89e" opacity=".4"/><rect x="20.7" y="70" width="2.4" height="2" fill="#a8a89e" opacity=".4"/><rect x="24.3" y="70" width="4.8" height="2" fill="#a8a89e" opacity=".4"/><rect x="29.1" y="70" width="9.6" height="2" fill="#a8a89e" opacity=".4"/><rect x="20.7" y="73" width="2.4" height="2" fill="#8c9a2c" opacity=".55"/><rect x="24.3" y="73" width="16.8" height="2" fill="#4a4a44" opacity=".55"/><rect x="42.3" y="73" width="2.4" height="2" fill="#b2a02c" opacity=".55"/><rect x="45.9" y="73" width="3.6" height="2" fill="#c4388c" opacity=".55"/><rect x="49.5" y="73" width="1.2" height="2" fill="#4a4a44" opacity=".55"/><rect x="51.9" y="73" width="1.2" height="2" fill="#4a4a44" opacity=".55"/><rect x="25.5" y="76" width="4.8" height="2" fill="#4a4a44" opacity=".55"/><rect x="30.3" y="76" width="13.2" height="2" fill="#b88f35" opacity=".55"/><rect x="43.5" y="76" width="2.4" height="2" fill="#4a4a44" opacity=".55"/><rect x="25.5" y="79" width="4.8" height="2" fill="#4a4a44" opacity=".55"/><rect x="30.3" y="79" width="10.8" height="2" fill="#b88f35" opacity=".55"/><rect x="41.1" y="79" width="2.4" height="2" fill="#4a4a44" opacity=".55"/><rect x="30.3" y="82" width="7.2" height="2" fill="#4a4a44" opacity=".55"/><rect x="38.7" y="82" width="1.2" height="2" fill="#3e8a84" opacity=".55"/><rect x="39.9" y="82" width="4.8" height="2" fill="#3e8a84" opacity=".55"/><rect x="44.7" y="82" width="1.2" height="2" fill="#3e8a84" opacity=".55"/><rect x="45.9" y="82" width="1.2" height="2" fill="#4a4a44" opacity=".55"/><rect x="30.3" y="85" width="9.6" height="2" fill="#4a4a44" opacity=".55"/><rect x="41.1" y="85" width="1.2" height="2" fill="#3e8a84" opacity=".55"/><rect x="42.3" y="85" width="28.8" height="2" fill="#3e8a84" opacity=".55"/><rect x="71.1" y="85" width="1.2" height="2" fill="#3e8a84" opacity=".55"/><rect x="72.3" y="85" width="1.2" height="2" fill="#4a4a44" opacity=".55"/><rect x="30.3" y="88" width="15.6" height="2" fill="#4a4a44" opacity=".55"/><rect x="45.9" y="88" width="1.2" height="2" fill="#3e8a84" opacity=".55"/><rect x="47.1" y="88" width="8.4" height="2" fill="#3e8a84" opacity=".55"/><rect x="55.5" y="88" width="1.2" height="2" fill="#3e8a84" opacity=".55"/><rect x="56.7" y="88" width="1.2" height="2" fill="#4a4a44" opacity=".55"/><rect x="30.3" y="91" width="8.4" height="2" fill="#b88f35" opacity=".55"/><rect x="38.7" y="91" width="1.2" height="2" fill="#4a4a44" opacity=".55"/><rect x="41.1" y="91" width="9.6" height="2" fill="#3c3c96" opacity=".55"/><rect x="50.7" y="91" width="6.0" height="2" fill="#4a4a44" opacity=".55"/><rect x="57.9" y="91" width="1.2" height="2" fill="#4a4a44" opacity=".55"/><rect x="35.1" y="94" width="2.4" height="2" fill="#8c9a2c" opacity=".55"/><rect x="38.7" y="94" width="15.6" height="2" fill="#4a4a44" opacity=".55"/><rect x="55.5" y="94" width="1.2" height="2" fill="#4a4a44" opacity=".55"/><rect x="39.9" y="97" width="4.8" height="2" fill="#4a4a44" opacity=".55"/><rect x="44.7" y="97" width="12.0" height="2" fill="#b88f35" opacity=".55"/><rect x="56.7" y="97" width="2.4" height="2" fill="#4a4a44" opacity=".55"/><rect x="44.7" y="100" width="4.8" height="2" fill="#4a4a44" opacity=".55"/><rect x="50.7" y="100" width="24.0" height="2" fill="#3e8a84" opacity=".55"/><rect x="39.9" y="103" width="2.4" height="2" fill="#4a4a44" opacity=".55"/><rect x="35.1" y="106" width="1.2" height="2" fill="#4a4a44" opacity=".55"/><rect x="30.3" y="109" width="1.2" height="2" fill="#4a4a44" opacity=".55"/><rect x="25.5" y="112" width="2.4" height="2" fill="#4a4a44" opacity=".55"/><rect x="20.7" y="115" width="1.2" height="2" fill="#4a4a44" opacity=".55"/><rect x="23.1" y="115" width="4.8" height="2" fill="#8c9a2c" opacity=".55"/><rect x="29.1" y="115" width="2.4" height="2" fill="#8c9a2c" opacity=".55"/><rect x="32.7" y="115" width="16.8" height="2" fill="#4a4a44" opacity=".55"/><rect x="50.7" y="115" width="2.4" height="2" fill="#b2a02c" opacity=".55"/><rect x="54.3" y="115" width="3.6" height="2" fill="#c4388c" opacity=".55"/><rect x="57.9" y="115" width="1.2" height="2" fill="#4a4a44" opacity=".55"/><rect x="60.3" y="115" width="1.2" height="2" fill="#4a4a44" opacity=".55"/><rect x="25.5" y="118" width="12.0" height="2" fill="#3c3c96" opacity=".55"/><rect x="37.5" y="118" width="3.6" height="2" fill="#4a4a44" opacity=".55"/><rect x="42.3" y="118" width="2.4" height="2" fill="#3c3c96" opacity=".55"/><rect x="45.9" y="118" width="1.2" height="2" fill="#4a4a44" opacity=".55"/><rect x="30.3" y="121" width="4.8" height="2" fill="#4a4a44" opacity=".55"/><rect x="35.1" y="121" width="12.0" height="2" fill="#b88f35" opacity=".55"/><rect x="47.1" y="121" width="2.4" height="2" fill="#4a4a44" opacity=".55"/><rect x="35.1" y="124" width="4.8" height="2" fill="#4a4a44" opacity=".55"/><rect x="41.1" y="124" width="26.4" height="2" fill="#3e8a84" opacity=".55"/><rect x="30.3" y="127" width="2.4" height="2" fill="#4a4a44" opacity=".55"/><rect x="25.5" y="130" width="2.4" height="2" fill="#4a4a44" opacity=".55"/><rect x="29.1" y="130" width="4.8" height="2" fill="#c4388c" opacity=".55"/><rect x="33.9" y="130" width="1.2" height="2" fill="#4a4a44" opacity=".55"/><rect x="20.7" y="133" width="1.2" height="2" fill="#4a4a44" opacity=".55"/><rect x="23.1" y="133" width="4.8" height="2" fill="#8c9a2c" opacity=".55"/><rect x="29.1" y="133" width="2.4" height="2" fill="#8c9a2c" opacity=".55"/><rect x="32.7" y="133" width="16.8" height="2" fill="#4a4a44" opacity=".55"/><rect x="50.7" y="133" width="2.4" height="2" fill="#b2a02c" opacity=".55"/><rect x="54.3" y="133" width="3.6" height="2" fill="#c4388c" opacity=".55"/><rect x="57.9" y="133" width="1.2" height="2" fill="#4a4a44" opacity=".55"/><rect x="60.3" y="133" width="1.2" height="2" fill="#4a4a44" opacity=".55"/><rect x="25.5" y="136" width="12.0" height="2" fill="#3c3c96" opacity=".55"/><rect x="37.5" y="136" width="3.6" height="2" fill="#4a4a44" opacity=".55"/><rect x="42.3" y="136" width="2.4" height="2" fill="#3c3c96" opacity=".55"/><rect x="45.9" y="136" width="1.2" height="2" fill="#4a4a44" opacity=".55"/><rect x="30.3" y="139" width="4.8" height="2" fill="#4a4a44" opacity=".55"/><rect x="35.1" y="139" width="12.0" height="2" fill="#b88f35" opacity=".55"/><rect x="47.1" y="139" width="2.4" height="2" fill="#4a4a44" opacity=".55"/><rect x="35.1" y="142" width="4.8" height="2" fill="#4a4a44" opacity=".55"/><rect x="41.1" y="142" width="26.4" height="2" fill="#3e8a84" opacity=".55"/><rect x="30.3" y="145" width="2.4" height="2" fill="#4a4a44" opacity=".55"/><rect x="25.5" y="148" width="2.4" height="2" fill="#4a4a44" opacity=".55"/><rect x="29.1" y="148" width="4.8" height="2" fill="#c4388c" opacity=".55"/><rect x="33.9" y="148" width="1.2" height="2" fill="#4a4a44" opacity=".55"/><rect x="20.7" y="151" width="1.2" height="2" fill="#4a4a44" opacity=".55"/><rect x="23.1" y="151" width="4.8" height="2" fill="#8c9a2c" opacity=".55"/><rect x="29.1" y="151" width="2.4" height="2" fill="#8c9a2c" opacity=".55"/><rect x="32.7" y="151" width="16.8" height="2" fill="#4a4a44" opacity=".55"/><rect x="50.7" y="151" width="2.4" height="2" fill="#b2a02c" opacity=".55"/><rect x="54.3" y="151" width="3.6" height="2" fill="#c4388c" opacity=".55"/><rect x="57.9" y="151" width="1.2" height="2" fill="#4a4a44" opacity=".55"/><rect x="60.3" y="151" width="1.2" height="2" fill="#4a4a44" opacity=".55"/><rect x="25.5" y="154" width="4.8" height="2" fill="#4a4a44" opacity=".55"/><rect x="30.3" y="154" width="13.2" height="2" fill="#b88f35" opacity=".55"/><rect x="43.5" y="154" width="2.4" height="2" fill="#4a4a44" opacity=".55"/><rect x="25.5" y="157" width="4.8" height="2" fill="#4a4a44" opacity=".55"/><rect x="30.3" y="157" width="10.8" height="2" fill="#b88f35" opacity=".55"/><rect x="41.1" y="157" width="2.4" height="2" fill="#4a4a44" opacity=".55"/><rect x="30.3" y="160" width="7.2" height="2" fill="#4a4a44" opacity=".55"/><rect x="38.7" y="160" width="15.6" height="2" fill="#4a4a44" opacity=".55"/><rect x="30.3" y="163" width="6.0" height="2" fill="#4a4a44" opacity=".55"/><rect x="37.5" y="163" width="7.2" height="2" fill="#3e8a84" opacity=".55"/><rect x="30.3" y="166" width="10.8" height="2" fill="#4a4a44" opacity=".55"/><rect x="42.3" y="166" width="4.8" height="2" fill="#c4388c" opacity=".55"/><rect x="25.5" y="169" width="2.4" height="2" fill="#4a4a44" opacity=".55"/><rect x="20.7" y="172" width="1.2" height="2" fill="#4a4a44" opacity=".55"/><rect x="20.7" y="175" width="8.4" height="2" fill="#b88f35" opacity=".55"/><rect x="29.1" y="175" width="12.0" height="2" fill="#4a4a44" opacity=".55"/><rect x="15.9" y="178" width="2.4" height="2" fill="#4a4a44" opacity=".55"/><rect x="11.1" y="181" width="2.4" height="2" fill="#4a4a44" opacity=".55"/><rect x="6.3" y="184" width="2.4" height="2" fill="#4a4a44" opacity=".55"/><rect x="1.5" y="187" width="1.2" height="2" fill="#4a4a44" opacity=".55"/><rect x="1.5" y="193" width="7.2" height="2" fill="#8c9a2c" opacity=".55"/><rect x="9.9" y="193" width="1.2" height="2" fill="#4a4a44" opacity=".55"/><rect x="6.3" y="196" width="4.8" height="2" fill="#4a4a44" opacity=".55"/><rect x="1.5" y="199" width="1.2" height="2" fill="#4a4a44" opacity=".55"/></svg></div></div>
  <div class="abs" style="left:871px;top:47px;width:8px;height:247px;background:#cdb160"></div>
  <div class="abs" style="left:871px;top:57px;width:8px;height:4px;background:#22b14c"></div>
  <div class="abs" style="left:0;top:833px;width:623px;height:8px;background:#cdb160"></div>
  <div id="codearea">
<i class="ig" style="left:92px;top:155px"></i>
<i class="ig" style="left:92px;top:180px"></i>
<i class="ig" style="left:92px;top:205px"></i>
<i class="ig" style="left:92px;top:230px"></i>
<i class="ig" style="left:92px;top:255px"></i>
<i class="ig" style="left:92px;top:280px"></i>
<i class="ig" style="left:132px;top:280px"></i>
<i class="ig" style="left:92px;top:305px"></i>
<i class="ig" style="left:132px;top:305px"></i>
<i class="ig" style="left:92px;top:330px"></i>
<i class="ig" style="left:132px;top:330px"></i>
<i class="ig" style="left:92px;top:355px"></i>
<i class="ig" style="left:132px;top:355px"></i>
<i class="ig" style="left:92px;top:380px"></i>
<i class="ig" style="left:132px;top:380px"></i>
<i class="ig" style="left:172px;top:380px"></i>
<i class="ig" style="left:92px;top:405px"></i>
<i class="ig" style="left:132px;top:405px"></i>
<i class="ig" style="left:172px;top:405px"></i>
<i class="ig" style="left:92px;top:430px"></i>
<i class="ig" style="left:132px;top:430px"></i>
<i class="ig" style="left:92px;top:455px"></i>
<i class="ig" style="left:132px;top:455px"></i>
<i class="ig" style="left:92px;top:480px"></i>
<i class="ig" style="left:132px;top:480px"></i>
<i class="ig" style="left:172px;top:480px"></i>
<i class="ig" style="left:92px;top:505px"></i>
<i class="ig" style="left:132px;top:505px"></i>
<i class="ig" style="left:172px;top:505px"></i>
<i class="ig" style="left:92px;top:530px"></i>
<i class="ig" style="left:132px;top:530px"></i>
<i class="ig" style="left:172px;top:530px"></i>
<i class="ig" style="left:92px;top:555px"></i>
<i class="ig" style="left:132px;top:555px"></i>
<i class="ig" style="left:172px;top:555px"></i>
<i class="ig" style="left:92px;top:580px"></i>
<i class="ig" style="left:132px;top:580px"></i>
<i class="ig" style="left:172px;top:580px"></i>
<i class="ig" style="left:92px;top:605px"></i>
<i class="ig" style="left:132px;top:605px"></i>
<i class="ig" style="left:172px;top:605px"></i>
<i class="ig" style="left:92px;top:630px"></i>
<i class="ig" style="left:132px;top:630px"></i>
<i class="ig" style="left:172px;top:630px"></i>
<i class="ig" style="left:212px;top:630px"></i>
<i class="ig" style="left:92px;top:655px"></i>
<i class="ig" style="left:132px;top:655px"></i>
<i class="ig" style="left:172px;top:655px"></i>
<i class="ig" style="left:212px;top:655px"></i>
<i class="ig" style="left:92px;top:680px"></i>
<i class="ig" style="left:132px;top:680px"></i>
<i class="ig" style="left:172px;top:680px"></i>
<i class="ig" style="left:212px;top:680px"></i>
<i class="ig" style="left:252px;top:680px"></i>
<i class="ig" style="left:92px;top:705px"></i>
<i class="ig" style="left:132px;top:705px"></i>
<i class="ig" style="left:172px;top:705px"></i>
<i class="ig" style="left:212px;top:705px"></i>
<i class="ig" style="left:252px;top:705px"></i>
<i class="ig" style="left:92px;top:730px"></i>
<i class="ig" style="left:132px;top:730px"></i>
<i class="ig" style="left:172px;top:730px"></i>
<i class="ig" style="left:212px;top:730px"></i>
<i class="ig" style="left:252px;top:730px"></i>
<i class="ig" style="left:92px;top:755px"></i>
<i class="ig" style="left:132px;top:755px"></i>
<i class="ig" style="left:172px;top:755px"></i>
<i class="ig" style="left:212px;top:755px"></i>
<i class="ig" style="left:252px;top:755px"></i>
<i class="ig" style="left:92px;top:780px"></i>
<i class="ig" style="left:132px;top:780px"></i>
<i class="ig" style="left:172px;top:780px"></i>
<i class="ig" style="left:212px;top:780px"></i>
<i class="ig" style="left:252px;top:780px"></i>
<i class="ig" style="left:292px;top:780px"></i>
<i class="fl" style="top:30px;height:25px"></i>
<i class="fl" style="top:55px;height:25px"></i>
<i class="fl" style="top:155px;height:25px"></i>
<i class="fl" style="top:180px;height:25px"></i>
<i class="fl" style="top:205px;height:25px"></i>
<i class="fl" style="top:230px;height:25px"></i>
<i class="fl" style="top:280px;height:25px"></i>
<i class="fl" style="top:305px;height:25px"></i>
<i class="fl" style="top:330px;height:25px"></i>
<i class="fl" style="top:380px;height:25px"></i>
<i class="fl" style="top:405px;height:25px"></i>
<i class="fl" style="top:430px;height:25px"></i>
<i class="fl" style="top:480px;height:25px"></i>
<i class="fl" style="top:505px;height:25px"></i>
<i class="fl" style="top:530px;height:25px"></i>
<i class="fl" style="top:555px;height:25px"></i>
<i class="fl" style="top:580px;height:25px"></i>
<i class="fl" style="top:630px;height:25px"></i>
<i class="fl" style="top:680px;height:25px"></i>
<i class="fl" style="top:705px;height:25px"></i>
<i class="fl" style="top:730px;height:25px"></i>
<i class="fl" style="top:80px;height:13px"></i><i class="ft" style="top:92px"></i>
<i class="ft" style="top:442px"></i><div class="ln" style="top:5px">1</div>
<div class="fold" style="top:13px"></div>
<div class="cl" style="top:5px"><span class="k">import</span> Vue <span class="k">from</span> <span class="s">'vue'</span></div>
<div class="ln" style="top:30px">2</div>
<div class="cl" style="top:30px"> <span class="b">let</span> baseUrl <span class="o">=</span> <span class="q">"</span><span class="s">https://582.haiwaiym18.top</span><i class="cur"></i><span class="q">"</span></div>
<div class="ln" style="top:55px">3</div>
<div class="cl" style="top:55px"><span class="c">// let baseUrl = "http://www.admin.com"//</span></div>
<div class="ln" style="top:80px">4</div>
<div class="cl" style="top:80px"><span class="c">// let baseUrl = "http://156.245.13.41"</span></div>
<div class="ln" style="top:105px">5</div>
<div class="fold" style="top:113px"></div>
<div class="cl" style="top:105px"><span class="b">function</span> <span class="f">ajax</span>(url, data, get, method) {</div>
<div class="ln" style="top:130px">6</div>
<div class="fold" style="top:138px"></div>
<div class="cl" style="top:130px">    <span class="k">return</span> <span class="k">new</span> <span class="g">Promise</span>((resolve, reject) <span class="b2">=&gt;</span> {</div>
<div class="ln" style="top:155px">7</div>
<div class="cl" style="top:155px">        <span class="b">let</span> contentType <span class="o">=</span> method <span class="o">?</span> <span class="s">'application/json'</span> <span class="o">:</span> <span class="s">'application/x-www-form-urlencoded'</span></div>
<div class="ln" style="top:180px">8</div>
<div class="cl" style="top:180px">        <span class="c">// uni.showLoading({</span></div>
<div class="ln" style="top:205px">9</div>
<div class="cl" style="top:205px">        <span class="c">//  title: '</span><span class="cz">加载中</span><span class="c">',</span></div>
<div class="ln" style="top:230px">10</div>
<div class="cl" style="top:230px">        <span class="c">// })</span></div>
<div class="ln" style="top:255px">11</div>
<div class="fold" style="top:263px"></div>
<div class="cl" style="top:255px">        uni.<span class="f">request</span>({</div>
<div class="ln" style="top:280px">12</div>
<div class="cl" style="top:280px">            url: baseUrl <span class="o">+</span> url,</div>
<div class="ln" style="top:305px">13</div>
<div class="cl" style="top:305px">            method: get <span class="o">?</span> <span class="s">'GET'</span> <span class="o">:</span> <span class="s">'POST'</span>,</div>
<div class="ln" style="top:330px">14</div>
<div class="cl" style="top:330px">            data,</div>
<div class="ln" style="top:355px">15</div>
<div class="fold" style="top:363px"></div>
<div class="cl" style="top:355px">            header: {</div>
<div class="ln" style="top:380px">16</div>
<div class="cl" style="top:380px">                <span class="s">'content-type'</span>: contentType,</div>
<div class="ln" style="top:405px">17</div>
<div class="cl" style="top:405px">                <span class="s">'token'</span>: uni.<span class="f">getStorageSync</span>(<span class="s">'token'</span>) <span class="o">?</span> uni.<span class="f">getStorageSync</span>(<span class="s">'token'</span>)</div>
<div class="ln" style="top:430px">18</div>
<div class="cl" style="top:430px">            },</div>
<div class="ln" style="top:455px">19</div>
<div class="fold" style="top:463px"></div>
<div class="cl" style="top:455px">            <span class="f">success</span>: (res) <span class="b2">=&gt;</span> {</div>
<div class="ln" style="top:480px">20</div>
<div class="cl" style="top:480px">                <span class="c">// 200:</span><span class="cz">成功</span></div>
<div class="ln" style="top:505px">21</div>
<div class="cl" style="top:505px">                <span class="c">// 301:</span><span class="cz">重新登陆</span></div>
<div class="ln" style="top:530px">22</div>
<div class="cl" style="top:530px">                <span class="c">// 302:</span><span class="cz">绑定身份证信息</span></div>
<div class="ln" style="top:555px">23</div>
<div class="cl" style="top:555px">                <span class="c">// 303:</span><span class="cz">绑定银行卡信息</span></div>
<div class="ln" style="top:580px">24</div>
<div class="cl" style="top:580px">                <span class="c">// 400:</span><span class="cz">错误信息</span></div>
<div class="ln" style="top:605px">25</div>
<div class="fold" style="top:613px"></div>
<div class="cl" style="top:605px">                <span class="k">if</span> (res.data.code <span class="o">==</span> <span class="n">301</span>) {</div>
<div class="ln" style="top:630px">26</div>
<div class="cl" style="top:630px">                    uni.<span class="f">hideLoading</span>()</div>
<div class="ln" style="top:655px">27</div>
<div class="fold" style="top:663px"></div>
<div class="cl" style="top:655px">                    uni.<span class="f">showModal</span>({</div>
<div class="ln" style="top:680px">28</div>
<div class="cl" style="top:680px">                        title: <span class="s">'</span><span class="sz">提示</span><span class="s">'</span>,</div>
<div class="ln" style="top:705px">29</div>
<div class="cl" style="top:705px">                        content: <span class="s">'</span><span class="sz">您登录已过期，请先去登录</span><span class="s">'</span>,</div>
<div class="ln" style="top:730px">30</div>
<div class="cl" style="top:730px">                        confirmColor:<span class="s">'</span><span class="su">#003467</span><span class="s">'</span>,</div>
<div class="ln" style="top:755px">31</div>
<div class="fold" style="top:763px"></div>
<div class="cl" style="top:755px">                        <span class="f">success</span>: <span class="b">function</span>(res) {</div>
<div class="ln" style="top:780px">32</div>
<div class="fold" style="top:788px"></div>
<div class="cl" style="top:780px">                            <span class="k">if</span> (res.confirm) {</div>
  </div>
</div>

<div id="lbar">
  <div class="abs" style="left:31px;top:0;width:288px;height:1px;background:#e3dabd"></div>
  <div class="abs" style="left:0;top:0;width:32px;height:30px;border:1px solid #e3dabd;border-top:none;border-left:none;border-radius:0 0 4px 0"></div>
  <svg class="abs" style="left:8px;top:7px" width="16" height="13" viewBox="0 0 16 13"><path d="M0 1.200C0 .5.5 0 1.200 0h4l1.500 1.800h8.100c.7 0 1.200.5 1.200 1.200v8.800c0 .7-.5 1.200-1.200 1.200H1.200C.5 13 0 12.500 0 11.800z" fill="#c9b06e"/><path d="M3.500 6h9M3.500 9.300h9" stroke="#fffae8" stroke-width="1.500"/></svg>
  <svg class="abs" style="left:40px;top:8px" width="16" height="13" viewBox="0 0 16 13"><circle cx="3.800" cy="8.800" r="3.200" fill="none" stroke="#e3d5aa" stroke-width="1.200"/><circle cx="12.200" cy="8.800" r="3.200" fill="none" stroke="#e3d5aa" stroke-width="1.200"/><path d="M1.500 6.500L4 1.200h2.500l.5 2h2l.5-2H12l2.500 5.300M7 7.500h2" fill="none" stroke="#e3d5aa" stroke-width="1.200"/></svg>
  <svg class="abs" style="left:73px;top:7px" width="14" height="15" viewBox="0 0 14 15"><ellipse cx="7" cy="9" rx="3.800" ry="5" fill="none" stroke="#e3d5aa" stroke-width="1.200"/><path d="M4.500 4.300a2.500 2.500 0 0 1 5 0M7 5v9M3.200 7L.8 5.200M3.200 9.500H.5M3.200 12l-2.300 1.600M10.800 7l2.400-1.800M10.800 9.500h2.700M10.800 12l2.300 1.600" fill="none" stroke="#e3d5aa" stroke-width="1.200"/></svg>
  <svg class="abs" style="left:104px;top:7px" width="17" height="15" viewBox="0 0 17 15"><path d="M12.500 11.200A6 6 0 1 1 13 5" fill="none" stroke="#e3d5aa" stroke-width="1.200"/><path d="M6.500 4.500h5v3.200M8 10.500h8.500M14.500 8.500l2 2-2 2" fill="none" stroke="#e3d5aa" stroke-width="1.200"/></svg>
  <svg class="abs" style="left:136px;top:7px" width="17" height="15" viewBox="0 0 17 15"><path d="M7.500 12.500A6 6 0 1 1 12.300 4M.8 6.500h6M6.500.600C4 4 4 9 6.500 12.500" fill="none" stroke="#e3d5aa" stroke-width="1.200"/><path d="M8.500 13.500h6a2.200 2.200 0 0 0 .3-4.400 3 3 0 0 0-5.800-.3A2.400 2.400 0 0 0 8.500 13.500z" fill="none" stroke="#e3d5aa" stroke-width="1.200"/></svg>
</div>
<div id="console">
  <span class="abs" style="left:23px;top:24px;font-size:14px;line-height:18px;color:#222;white-space:nowrap">newapp2 - H5</span>
  <div class="abs" style="left:18px;top:46px;width:118px;height:1px;background:linear-gradient(90deg,#5fa585,#8aa89a)"></div>
  <span class="abs" style="left:169px;top:24px;font-size:13px;line-height:18px;color:#666;white-space:nowrap">控制台</span>
  <!-- right icons -->
  <svg class="abs" style="left:1021px;top:26px" width="13" height="14" viewBox="0 0 13 14"><ellipse cx="6.500" cy="8" rx="3.600" ry="4.800" fill="none" stroke="#dba392" stroke-width="1"/><path d="M4.300 3.800a2.200 2.200 0 0 1 4.400 0M6.500 4v8.500M2.900 6L.8 4.500M2.900 8.500H.5M2.900 10.500l-2 1.500M10.100 6l2.100-1.500M10.100 8.500h2.400M10.100 10.500l2 1.500" fill="none" stroke="#dba392" stroke-width="1"/></svg>
  <svg class="abs" style="left:1051px;top:26px" width="14" height="14" viewBox="0 0 14 14"><path d="M2.300 2.800A6 6 0 1 1 1 7" fill="none" stroke="#b9b8b4" stroke-width="1"/><path d="M1 .8v2.500h2.500" fill="none" stroke="#b9b8b4" stroke-width="1"/><path d="M5.500 4.500l4 2.500-4 2.500z" fill="none" stroke="#b9b8b4" stroke-width="1" stroke-linejoin="round"/></svg>
  <svg class="abs" style="left:1082px;top:26px" width="13" height="13" viewBox="0 0 13 13"><rect x=".500" y=".500" width="12" height="12" fill="none" stroke="#c4907f" stroke-width="1"/><rect x="2.500" y="2.500" width="8" height="8" fill="#c4907f"/></svg>
  <svg class="abs" style="left:1111px;top:26px" width="15" height="13" viewBox="0 0 15 13"><path d="M9 .500H.5v12h12V6" fill="none" stroke="#6a9a84" stroke-width="1"/><path d="M3 4l2.300 2.200L3 8.400M6.500 9.500h3" fill="none" stroke="#6a9a84" stroke-width="1"/><path d="M12.500 0v5M10 2.500h5" stroke="#6a9a84" stroke-width="1"/></svg>
  <svg class="abs" style="left:1140px;top:28px" width="15" height="9" viewBox="0 0 15 9"><path d="M.700 8.300L7.500 1.200l6.800 7.100" fill="none" stroke="#4a6a5c" stroke-width="1.100"/></svg>
  <svg class="abs" style="left:1171px;top:27px" width="16" height="11" viewBox="0 0 16 11"><path d="M.500.500l8 10M8.500.500l-8 10" stroke="#3c5c4e" stroke-width="1.200"/><path d="M12.500 0v9.500M10 7l2.500 3L15 7" fill="none" stroke="#3c5c4e" stroke-width="1.100"/></svg>
  <div class="abs" style="left:1191px;top:78px;width:7px;height:14px;background:#faf3e0"></div>
  <!-- lines -->
  <div id="conlines">
  <div class="col" style="top:62px"><span class="t">09:16:54.033 </span>(Emitted value instead of an instance of Error) &lt;v-uni-swiper-item v-for="item in this.swiperList"&gt;: component lis</div>
  <div class="col" style="top:82px">ts rendered with v-for should have explicit keys. See <a>https://vuejs.org/guide/list.html#key</a> for more info.</div>
  <div class="col" style="top:102px"><span class="t">09:16:54.037 </span>  App running at:</div>
  <div class="col" style="top:122px"><span class="t">09:16:54.038 </span>  - Local:   <a>http://localhost:8080/</a></div>
  <div class="col" style="top:142px"><span class="t">09:16:54.039 </span>  - Network: <a>http://192.168.31.33:8080/</a></div>
  <div class="col" style="top:162px"><span class="t">09:16:54.040 </span><span class="z">项目</span> 'newapp2' <span class="z">编译成功。前端运行日志，请另行在浏览器的控制台查看。</span></div>
  <div class="col w" style="top:182px"><span class="t">09:16:54.043 </span><span class="z">点击控制台右上角</span><b>debug</b><span class="z">图标（虫子），可开启断点调试（添加断点：双击编辑器行号添加断点）</span></div>
  </div>
</div>
<div id="status">
  <svg class="abs" style="left:29px;top:5px" width="14" height="14" viewBox="0 0 14 14"><circle cx="7" cy="7" r="6.300" fill="none" stroke="#adadab" stroke-width="1.200"/><circle cx="7" cy="5.300" r="2.300" fill="#b5b5b3"/><path d="M2.800 11.500c.6-2.600 2.200-3.600 4.200-3.600s3.600 1 4.200 3.600" fill="#b5b5b3"/></svg>
  <span style="left:49px;color:#35a046">未登录</span>
  <svg class="abs" style="left:150px;top:6px" width="13" height="12" viewBox="0 0 13 12"><path d="M0 1.500h2.500M0 6h2.500M0 10.500h2.500" stroke="#6c8a7c" stroke-width="1.600"/><path d="M4.500 1.500H13M4.500 6H13M4.500 10.500H13" stroke="#6c8a7c" stroke-width="1.100"/></svg>
  <svg class="abs" style="left:176px;top:6px" width="14" height="12" viewBox="0 0 14 12"><rect x=".500" y=".500" width="13" height="11" fill="none" stroke="#555" stroke-width="1"/><path d="M3 3.500l2.300 2.200L3 7.900M6.500 8.800h3" fill="none" stroke="#555" stroke-width="1"/></svg>
  <span style="left:1255px">语法提示库</span>
  <span style="left:1341px">行:2 &nbsp;&nbsp;列:43</span>
  <span style="left:1428px">UTF-8</span>
  <span style="left:1488px">JavaScript</span>
  <svg class="abs" style="left:1570px;top:5px" width="16" height="15" viewBox="0 0 16 15"><circle cx="6.500" cy="8.500" r="5.600" fill="#d9c68e" stroke="#bfa866" stroke-width="1.200"/><path d="M6.500 5v4h-2.500" fill="none" stroke="#fff" stroke-width="1.400"/><circle cx="12.500" cy="3" r="2.200" fill="#e2432f"/></svg>
  <svg class="abs" style="left:1601px;top:5px" width="12" height="14" viewBox="0 0 12 14"><path d="M6 .500c.6 0 1 .4 1 1v.4c2 .5 3.200 2.200 3.200 4.400v2.900l1.300 1.600v.7H.5v-.7l1.300-1.600V6.300c0-2.200 1.200-3.900 3.200-4.400v-.4c0-.6.400-1 1-1z" fill="#cdb477"/><path d="M4.500 12.300a1.500 1.500 0 0 0 3 0z" fill="#cdb477"/></svg>
</div>
<div id="right">
  <div class="abs" style="left:0;top:0;width:439px;height:30px;background:#fffae8;border-bottom:1px solid #e3dabd"></div>
  <div class="abs" style="left:0;top:0;width:111px;height:30px;background:#fffdf6;border-right:1px solid #e3dabd"></div>
  <span class="abs" style="left:11px;top:8px;font-size:12px;line-height:16px;color:#333">Web浏览器</span>
  <svg class="abs" style="left:88px;top:12px" width="8" height="8" viewBox="0 0 8 8"><path d="M.300.300l7.400 7.400M7.700.300L.3 7.700" stroke="#555" stroke-width="1"/></svg>
  <div class="abs" style="left:0;top:30px;width:439px;height:72px;background:#fffdf6;border-bottom:1px solid #e8e0cc"></div>
  <div class="abs" style="left:6px;top:37px;width:427px;height:26px;border:1px solid #e2e0d6;background:#fffefb"></div>
  <span class="abs" style="left:15px;top:42px;font-size:13px;line-height:16px;color:#333">http://localhost:8080/#/</span>
  <div class="abs" style="left:6px;top:68px;width:120px;height:27px;border:1px solid #5c9a80;background:#fffdf6"></div>
  <span class="abs" style="left:12px;top:74px;font-size:13px;line-height:16px;color:#333">iPhone 6/7/8</span>
  <svg class="abs" style="left:113px;top:79px" width="7" height="4" viewBox="0 0 7 4"><path d="M0 0h7L3.500 4z" fill="#555"/></svg>
  <!-- icons -->
  <svg class="abs" style="left:137px;top:75px" width="14" height="13" viewBox="0 0 14 13"><path d="M5.500 1h7.900v11.400H2.600V6.500" fill="none" stroke="#4a9a78" stroke-width="1.100"/><path d="M.700.700l6 6M.700 4.500V.700h3.800" fill="none" stroke="#4a9a78" stroke-width="1.100"/></svg>
  <svg class="abs" style="left:167px;top:74px" width="14" height="14" viewBox="0 0 14 14"><path d="M7 .700c1 0 1.600 1.300 2.500 1.600.9.400 2.200-.2 2.900.5.700.7.100 2 .5 2.900.3.900 1.600 1.500 1.600 2.500s-1.300 1.600-1.600 2.500c-.4.900.2 2.200-.5 2.900-.7.700-2 .1-2.900.5-.9.300-1.500 1.600-2.500 1.600s-1.600-1.300-2.500-1.600c-.9-.4-2.200.2-2.900-.5-.7-.7-.1-2-.5-2.900C.8 9.800-.5 9.200-.5 8.200S.8 6.600 1.100 5.700c.4-.9-.2-2.200.5-2.900.7-.7 2-.1 2.900-.5C5.400 2 6 .700 7 .700z" transform="translate(.45 -.9) scale(.93)" fill="none" stroke="#4a9a78" stroke-width="1.200"/><circle cx="7" cy="7" r="2.300" fill="none" stroke="#4a9a78" stroke-width="1.100"/></svg>
  <svg class="abs" style="left:198px;top:75px" width="15" height="12" viewBox="0 0 15 12"><rect x=".550" y=".550" width="13.900" height="10.900" fill="none" stroke="#4a9a78" stroke-width="1.100"/><path d="M3 3l2.500 2.300L3 7.600M7 8.500h3.500" fill="none" stroke="#4a9a78" stroke-width="1.100"/></svg>
  <svg class="abs" style="left:228px;top:76px" width="14" height="10" viewBox="0 0 14 10"><path d="M13.500 5H1M5 .700L.8 5 5 9.300" fill="none" stroke="#aaa9a4" stroke-width="1.200"/></svg>
  <svg class="abs" style="left:257px;top:76px" width="14" height="10" viewBox="0 0 14 10"><path d="M.5 5H13M9 .700L13.200 5 9 9.300" fill="none" stroke="#aaa9a4" stroke-width="1.200"/></svg>
  <svg class="abs" style="left:288px;top:74px" width="14" height="14" viewBox="0 0 14 14"><path d="M12.300 9.300A5.900 5.900 0 1 1 11.800 3.500" fill="none" stroke="#4a9a78" stroke-width="1.100"/><path d="M12.600.600v3.400H9.200" fill="none" stroke="#4a9a78" stroke-width="1.100"/></svg>
  <svg class="abs" style="left:319px;top:74px" width="11" height="13" viewBox="0 0 11 13"><rect x=".600" y="5.600" width="9.800" height="6.800" rx=".8" fill="none" stroke="#4a9a78" stroke-width="1.100"/><path d="M2.600 5.500V3.400a2.700 2.700 0 0 1 5.300-.7" fill="none" stroke="#4a9a78" stroke-width="1.100"/></svg>
  <svg class="abs" style="left:348px;top:75px" width="12" height="12" viewBox="0 0 12 12"><rect x=".550" y=".550" width="4" height="4" fill="none" stroke="#4a9a78" stroke-width="1.100"/><rect x="7.450" y=".550" width="4" height="4" fill="none" stroke="#4a9a78" stroke-width="1.100"/><rect x=".550" y="7.450" width="4" height="4" fill="none" stroke="#4a9a78" stroke-width="1.100"/><path d="M7 7.500h2M11 7v2M7 11.500h1.500M10 11.500h2" stroke="#4a9a78" stroke-width="1.100"/></svg>
</div>
<div id="phone">
  <div id="banner"></div>
  <div id="phead">首页</div>
  <div class="pill" style="left:206px"><svg class="abs" style="left:11px;top:5px" width="20" height="20" viewBox="0 0 20 20"><g transform="rotate(-20 10 10)"><rect x="3" y="4" width="14" height="13" rx="2" fill="#ffe3d6"/><path d="M3 6a2 2 0 0 1 2-2h10a2 2 0 0 1 2 2v2H3z" fill="#e8382f"/><path d="M7.500 12.200l2 2 3.500-3.600" fill="none" stroke="#e8382f" stroke-width="2"/><path d="M6.500 2.500v3M10 2.500v3M13.500 2.500v3" stroke="#e8382f" stroke-width="1.500"/></g></svg><span>签到</span></div>
  <div class="pill" style="left:290px"><svg class="abs" style="left:12px;top:4px" width="18" height="22" viewBox="0 0 18 22"><path d="M4 1h10v5H4z" fill="#f3c96a"/><circle cx="9" cy="12.500" r="7" fill="#f4b52e"/><circle cx="9" cy="12.500" r="4.200" fill="#f9d46c"/><path d="M5 18.500L4 22l5-2 5 2-1-3.500z" fill="#f0a928"/></svg><span>排名</span></div>
  <!-- daily sign card -->
  <div class="abs" style="left:10px;top:305px;width:355px;height:76px;border-radius:8px;background:linear-gradient(90deg,#7dd44c 0,#4fb340 35%,#2f9d39 70%,#27933a 100%);overflow:hidden">
    <span class="abs" style="left:12px;top:12.500px;font-size:17.700px;font-weight:bold;color:#fff;line-height:22px">每日签到</span>
    <span class="abs" style="left:12px;top:45px;font-size:13px;color:rgba(255,255,255,.8);line-height:16px">宣导幸福 每日领取</span>
    <span class="abs" style="left:136px;top:43px;width:89px;height:18px;border-radius:9px;background:linear-gradient(90deg,#b9e45a,#f3e85a);color:#fff;font-size:12px;line-height:18px;text-align:center;font-weight:bold">签到有好礼</span>
    <!-- small gift -->
    <svg class="abs" style="left:229px;top:-7px" width="40" height="40" viewBox="0 0 40 40"><g transform="translate(3 16) rotate(-38 16 12) scale(.56)"><use href="#giftbox"/></g></svg>
    <!-- big gift -->
    <svg class="abs" style="left:294px;top:3.500px" width="56" height="62" viewBox="0 0 56 62"><defs><linearGradient id="lidg" x1="0" y1="0" x2="1" y2="1"><stop offset="0" stop-color="#ffe3d6"/><stop offset="1" stop-color="#ff9c8c"/></linearGradient></defs><ellipse cx="28" cy="57" rx="24" ry="4" fill="rgba(0,50,0,.18)"/>
<g id="giftbox">
<path d="M3.500 30.500L28 41.500V58L3.500 46z" fill="#f4584a"/>
<path d="M28 41.500L52.500 30.500V46L28 58z" fill="#df372f"/>
<path d="M13 35l5 2.300v16.200l-5-2.400z" fill="#f9c65c"/>
<path d="M38 37.300l5-2.300v16.100l-5 2.400z" fill="#efa738"/>
<path d="M.300 22.700L28 35.300V41L.3 29z" fill="#f9796a"/>
<path d="M28 35.300l27.300-12.600V29L28 41z" fill="#ec5447"/>
<path d="M.300 22.700L28 14l27.300 8.700L28 35.300z" fill="url(#lidg)"/>
<path d="M11.500 27.800l5 2.400 28-11.200-5-2z" fill="#fbd58a"/>
<path d="M44.500 27.800l-5 2.400-28-11.200 5-2z" fill="#f9c86a"/>
<path d="M11.500 27.800l5 2.400v5.600l-5-2.300zM44.500 27.800l-5 2.400v5.600l5-2.300z" fill="#f3b548"/>
<ellipse cx="19.500" cy="8.500" rx="9" ry="6" transform="rotate(-22 19.500 8.500)" fill="#f6b541"/>
<ellipse cx="36.500" cy="8.500" rx="9" ry="6" transform="rotate(22 36.500 8.500)" fill="#f6b541"/>
<ellipse cx="19.500" cy="9" rx="5" ry="2.800" transform="rotate(-22 19.500 9)" fill="#e5942a"/>
<ellipse cx="36.500" cy="9" rx="5" ry="2.800" transform="rotate(22 36.500 9)" fill="#e5942a"/>
<ellipse cx="28" cy="13.500" rx="4.500" ry="3.800" fill="#f9c554"/>
</g></svg>
    <span class="abs" style="left:283px;top:35px;width:5px;height:5px;border-radius:3px;background:#e8b040"></span>
  </div>
  <!-- two cards -->
  <div class="abs" style="left:10px;top:390px;width:173px;height:55px;border-radius:6px;z-index:2;background:linear-gradient(100deg,#fff 0,#fbfffa 45%,#e2f7e0 100%)">
    <span class="abs" style="left:10px;top:0px;font-size:14px;font-weight:bold;color:#222;line-height:18px">邀请好友</span>
    <span class="abs" style="left:10px;top:23px;font-size:12px;color:#aaa;line-height:20.500px;width:92px">赋能发展 群雁齐飞</span>
    <svg class="abs" style="left:106px;top:4px" width="72" height="40" viewBox="0 0 72 40"><rect x="0" y="6" width="16" height="11" rx="3" transform="rotate(20 8 11)" fill="#f5c34c"/><rect x="54" y="4" width="16" height="11" rx="3" transform="rotate(-20 62 9)" fill="#5b9be8"/><path d="M12 12l18 2 12 8-4 8-14 2-14-10z" fill="#fbd2bd"/><path d="M58 10L40 14 26 22l6 9 14-1 14-12z" fill="#f9c2a8"/><path d="M28 26l8 5 4-3" fill="none" stroke="#f0a58a" stroke-width="1.500"/></svg>
  </div>
  <div class="abs" style="left:191px;top:390px;width:174px;height:55px;border-radius:6px;background:linear-gradient(100deg,#fff 0,#fff6f4 40%,#fcdcda 100%);overflow:hidden">
    <span class="abs" style="left:14px;top:10px;font-size:14px;font-weight:bold;color:#222;line-height:18px">关于我们</span>
    <span class="abs" style="left:14px;top:36px;font-size:12px;color:#aaa;line-height:16px">提现，即刻到账</span>
    <svg class="abs" style="left:112px;top:5px" width="48" height="48" viewBox="0 0 48 48"><defs><linearGradient id="rpg" x1="0" y1="1" x2="1" y2="0"><stop offset="0" stop-color="#f9b53a"/><stop offset=".5" stop-color="#f0663a"/><stop offset="1" stop-color="#e23a44"/></linearGradient></defs><path d="M8 12c1-3 4-3 4.500 0l1.500 5 2-9c.6-3 4-2.600 4 .4L20 17l3-10c1-3 4.400-2 4 1l-2 12z" fill="#f9c0a6"/><path d="M14 34c2-6 8-10 16-10l12-4c3-1 4.500 2 2 4L34 36l-2 11H12z" fill="#f8b699"/><rect x="3" y="15" width="36" height="22" rx="3" transform="rotate(-33 21 26)" fill="url(#rpg)"/><circle cx="21" cy="24" r="5" fill="#fbd978"/><path d="M30 14c3-5 6-8 8-8-1 4-3 8-6 11z" fill="#f3b43c"/><path d="M3 34c4 0 8-1 11-3" fill="none" stroke="#f9c45a" stroke-width="1.500"/></svg>
  </div>
  <!-- link band -->
  <div class="abs" style="left:10px;top:445px;width:355px;height:54px;background:#e9f3fc"></div>
  <span class="abs" style="left:10px;top:451px;width:355px;font-size:17.630px;color:#c6222e;line-height:22px;white-space:nowrap;letter-spacing:0">https://meeting.tencent.com/crm/l5noY7XD8a</span>
  <div class="abs" style="left:104px;top:478px;width:168px;height:21px;background:#1f7ec2;color:#fff;font-size:16px;line-height:21px;white-space:nowrap"><svg class="abs" style="left:12px;top:5px" width="15" height="11" viewBox="0 0 15 11"><rect x=".800" y=".800" width="10" height="9.400" rx="2" fill="none" stroke="#fff" stroke-width="1.500"/><path d="M4.500 3.500l3 2-3 2z" fill="#fff"/><path d="M12 3.500l2.500-1.500v7L12 7.500" fill="none" stroke="#fff" stroke-width="1.300"/></svg><span class="abs" style="left:29px;top:0">复制链接观看会议</span></div>
  <!-- news -->
  <div class="abs" style="left:10px;top:513px;width:355px;height:160px;border-radius:8px;background:#fff"></div>
  <span class="abs" style="left:25px;top:533px;font-size:18px;font-weight:bold;color:#1a2b22;line-height:24px">新闻导航</span>
  <span class="abs" style="left:155px;top:577px;width:196px;font-size:14px;color:#555;line-height:19px">中国人口福利基金会召开2024年工作总结汇报会</span>
  <!-- tabbar -->
  <div id="tabbar">
    <svg class="abs" style="left:35px;top:8px" width="24" height="24" viewBox="0 0 24 24"><defs><linearGradient id="hg" x1="0" y1="0" x2="0" y2="1"><stop offset="0" stop-color="#6fd04a"/><stop offset="1" stop-color="#1f8a35"/></linearGradient></defs><path d="M12 1.500L1.500 9v11a2.500 2.500 0 0 0 2.500 2.500h16a2.500 2.500 0 0 0 2.500-2.500V9z" fill="url(#hg)"/><path d="M7.500 16.500h9" stroke="#fff" stroke-width="2.200" stroke-linecap="round"/></svg>
    <span style="left:17px;color:#3c9c5c">首页</span>
    <svg class="abs" style="left:132px;top:9px" width="19" height="21" viewBox="0 0 22 24"><rect x="1.200" y="1.200" width="19" height="21.600" rx="4" fill="none" stroke="#9a9aa2" stroke-width="1.800"/><path d="M6 7.500h10M6 12h4" stroke="#9a9aa2" stroke-width="1.800" stroke-linecap="round"/><path d="M10.500 16.500l2.500 2.500 4-5" fill="none" stroke="#9a9aa2" stroke-width="1.800" stroke-linecap="round"/></svg>
    <span style="left:111px">申购</span>
    <svg class="abs" style="left:221px;top:8px" width="26" height="26" viewBox="0 0 26 26"><path d="M4.500 15V12a8.500 8.500 0 0 1 17 0v3" fill="none" stroke="#b5b5bb" stroke-width="2"/><rect x="2" y="11.500" width="4" height="7" rx="2" fill="#8f8f98"/><rect x="20" y="11.500" width="4" height="7" rx="2" fill="#8f8f98"/><path d="M21.500 18c0 3-3 5-7 5" fill="none" stroke="#8f8f98" stroke-width="1.800"/><circle cx="13.500" cy="23" r="1.800" fill="#8f8f98"/></svg>
    <span style="left:204px">客服</span>
    <svg class="abs" style="left:318px;top:10px" width="20" height="20" viewBox="0 0 24 24"><circle cx="12" cy="8" r="6" fill="none" stroke="#9a9aa2" stroke-width="1.800"/><path d="M2 23c1-6 5-9 10-9s9 3 10 9" fill="none" stroke="#9a9aa2" stroke-width="1.800" stroke-linecap="round"/></svg>
    <span style="left:298px">我的</span>
  </div>
</div>
<svg class="abs" style="left:1193px;top:424.5px;z-index:60" width="300" height="300" viewBox="0 0 300 300">
  <defs><path id="arcT" d="M140.59 257.59A108 108 0 1 1 159.41 257.59"/><path id="arcB" d="M19.00 150.00A131 131 0 0 0 281.00 150.00"/></defs>
  <circle cx="150" cy="150" r="139" fill="none" stroke="#f20c0c" stroke-width="6"/>
  <text font-family="'DejaVu Sans Mono','Liberation Mono',monospace" font-weight="bold" font-size="23.500" fill="#f20c0c" letter-spacing="11.080" text-anchor="middle"><textPath href="#arcT" startOffset="48.99%">www.haiwaiym.com</textPath></text>
  <text x="149" y="164" font-family="'Liberation Serif','Noto Serif CJK SC',serif" font-weight="600" font-size="37" fill="#f20c0c" letter-spacing="3" text-anchor="middle" transform="translate(3 0)">海外源码</text>
  <circle cx="243" cy="154.500" r="4" fill="#000"/>
  <text x="152" y="229.500" font-family="'DejaVu Sans Mono','Liberation Mono',monospace" font-weight="bold" font-size="24" fill="#f20c0c" letter-spacing="2.470" text-anchor="middle">haiwaiym.com</text>
  <text font-family="'Liberation Mono','DejaVu Sans Mono',monospace" font-size="12.500" fill="#f20c0c" letter-spacing="7.600" text-anchor="middle"><textPath href="#arcB" startOffset="50.800%">haiwaiym.com</textPath></text>
</svg>

<div class="wm" style="left:52px;top:331px">海外源码 <span>haiwaiym.com</span></div>
<div class="wm" style="left:1047px;top:616px">海外源码 <span>haiwaiym.com</span></div>

<div id="frame"></div>

</body></html>
